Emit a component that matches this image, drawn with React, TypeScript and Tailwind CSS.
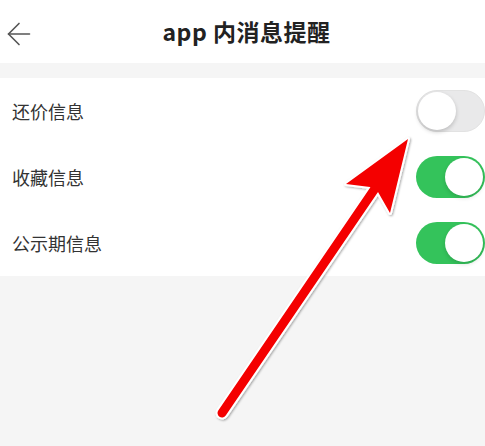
import { ArrowLeft } from 'lucide-react';

const settings = [
  { label: '还价信息', on: false },
  { label: '收藏信息', on: true },
  { label: '公示期信息', on: true },
];

function Toggle({ on }: { on: boolean }) {
  return (
    <div
      className={
        on
          ? 'relative w-[69px] h-[42px] rounded-full bg-[#34c35b]'
          : 'relative w-[69px] h-[42px] rounded-full bg-[#e9e9ea] border border-[#e2e2e2]'
      }
    >
      <div
        className={
          on
            ? 'absolute top-[2px] right-[2px] w-[38px] h-[38px] rounded-full bg-white shadow-[0_2px_4px_rgba(0,0,0,0.15)]'
            : 'absolute top-[1px] left-[1px] w-[38px] h-[38px] rounded-full bg-white shadow-[0_2px_4px_rgba(0,0,0,0.2)]'
        }
      />
    </div>
  );
}

export default function App() {
  return (
    <div
      className="relative w-full h-[446px] overflow-hidden bg-[#f5f5f5]"
      style={{ fontFamily: '"Noto Sans CJK SC", "Noto Sans", sans-serif' }}
    >
      <header className="relative h-[63px] bg-white flex items-center justify-center">
        <ArrowLeft className="absolute left-[1px] top-[16px] text-[#555]" size={36} strokeWidth={1.1} />
        <h1 className="pl-2 text-[23px] font-bold text-[#222] tracking-[0.5px]">app 内消息提醒</h1>
      </header>

      <div className="h-[15px]" />

      <ul className="bg-white">
        {settings.map((s) => (
          <li key={s.label} className="h-[66px] flex items-center justify-between pl-3">
            <span className="text-[18px] text-[#333]">{s.label}</span>
            <Toggle on={s.on} />
          </li>
        ))}
      </ul>

      {/* red pointer drawn over the list */}
      <svg className="absolute inset-0 pointer-events-none" width="485" height="446" viewBox="0 0 485 446">
        <defs>
          <filter id="drop" x="-20%" y="-20%" width="140%" height="140%">
            <feDropShadow dx="1" dy="1" stdDeviation="1.2" floodColor="#000" floodOpacity="0.35" />
          </filter>
        </defs>
        <g filter="url(#drop)">
          <line x1="222" y1="413" x2="376" y2="187" stroke="#fff" strokeWidth="13" strokeLinecap="round" />
          <polygon
            points="408,139 390,213 378,192 370,187 346,184"
            fill="#fff"
            stroke="#fff"
            strokeWidth="4"
            strokeLinejoin="round"
          />
        </g>
        <line x1="222" y1="413" x2="376" y2="187" stroke="#f40000" strokeWidth="9" strokeLinecap="round" />
        <polygon points="408,139 390,213 378,192 370,187 346,184" fill="#f40000" />
      </svg>
    </div>
  );
}
